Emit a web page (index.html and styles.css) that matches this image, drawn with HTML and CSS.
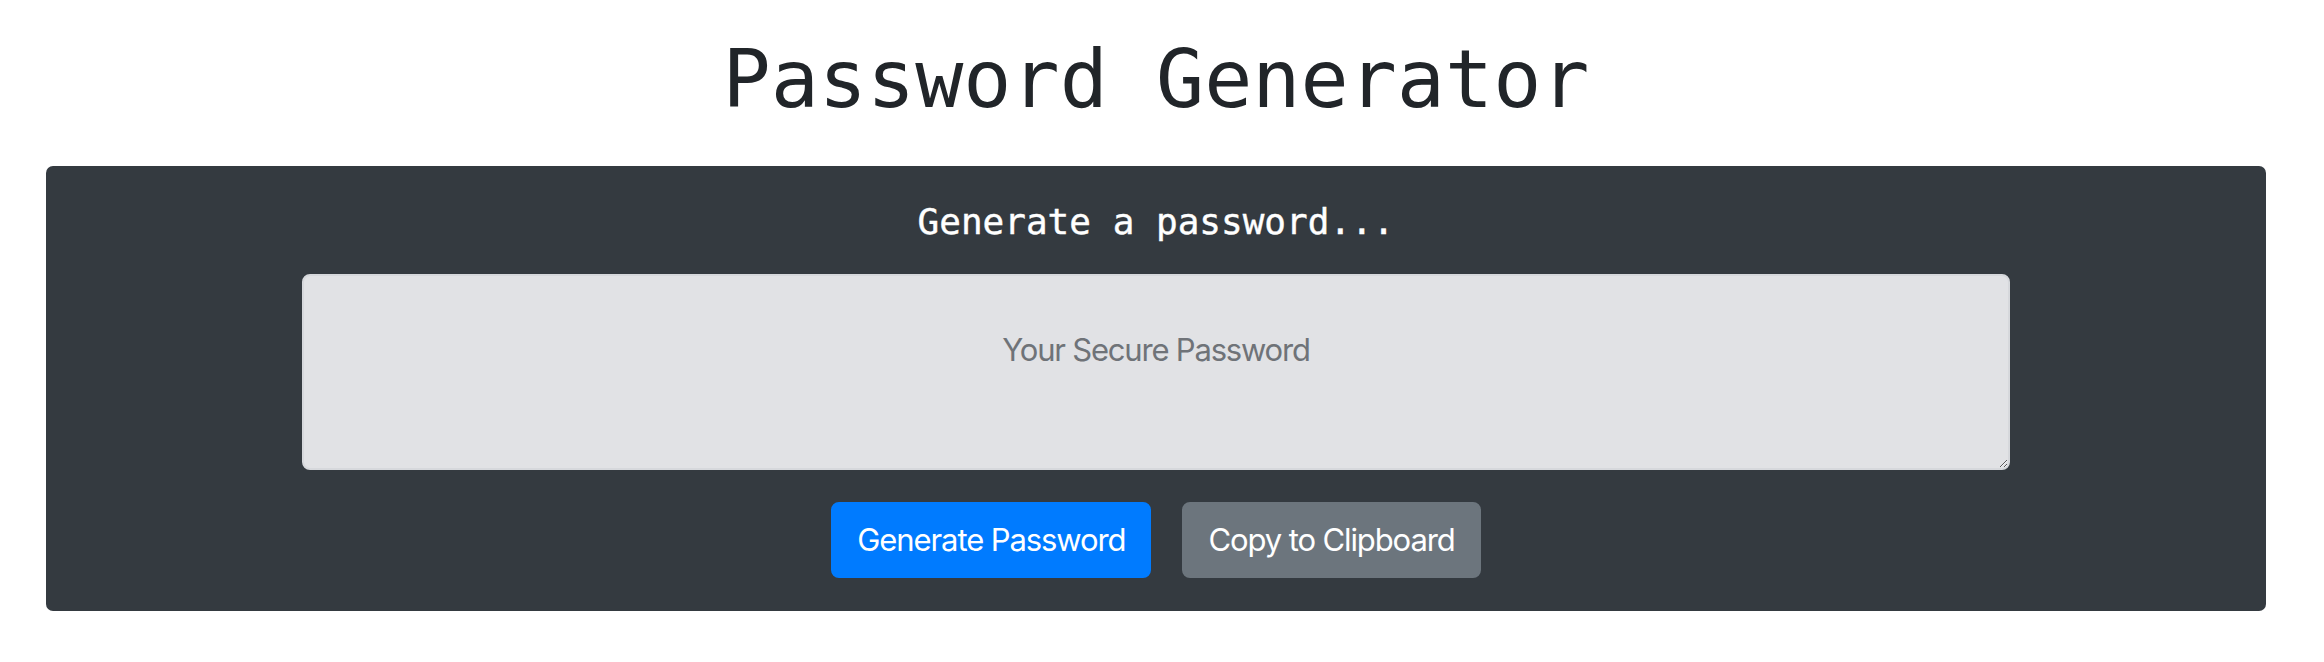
FILE: index.html
```html
<!DOCTYPE html>
<html lang="en">
<head>
<meta charset="utf-8">
<title>Password Generator</title>
<link rel="stylesheet" href="styles.css">
</head>
<body>
  <div class="container">
    <h1 class="title">Password Generator</h1>
    <div class="card">
      <h2 class="card-title">Generate a password...</h2>
      <textarea class="password" placeholder="Your Secure Password" readonly></textarea>
      <div class="actions">
        <button class="btn btn-primary" type="button">Generate Password</button>
        <button class="btn btn-secondary" type="button">Copy to Clipboard</button>
      </div>
    </div>
  </div>
</body>
</html>
```

FILE: styles.css
```css
html, body {
  margin: 0;
  padding: 0;
  background: #ffffff;
}

body {
  padding-right: 12px;
  font-family: Inter, "Noto Sans", sans-serif;
  color: #212529;
}

.container {
  max-width: 2220px;
  margin: 0 auto;
}

.title {
  margin: 32px 0 0;
  font-family: "DejaVu Sans Mono", "Liberation Mono", monospace;
  font-size: 80px;
  font-weight: 400;
  line-height: 96px;
  text-align: center;
  color: #212529;
}

.card {
  margin-top: 38px;
  background: #343a40;
  border-radius: 7px;
  padding: 34px 0 33px;
  display: flex;
  flex-direction: column;
  align-items: center;
}

.card-title {
  margin: 0;
  font-family: "DejaVu Sans Mono", "Liberation Mono", monospace;
  font-size: 36px;
  font-weight: 400;
  line-height: 43px;
  color: #ffffff;
  -webkit-text-stroke: 0.4px #ffffff;
}

.password {
  margin-top: 31px;
  width: 1708px;
  height: 196px;
  box-sizing: border-box;
  background: #e1e2e5;
  border: 2px solid #d6d8dc;
  border-radius: 8px;
  padding: 50px 24px 12px;
  font-family: Inter, "Noto Sans", sans-serif;
  font-size: 31px;
  letter-spacing: -1.2px;
  line-height: 48px;
  text-align: center;
  color: #495057;
  outline: none;
}

.password::placeholder {
  color: #6f7378;
  opacity: 1;
}

.actions {
  margin-top: 32px;
  display: flex;
  gap: 31px;
}

.btn {
  font-family: Inter, "Noto Sans", sans-serif;
  font-size: 31px;
  letter-spacing: -1.1px;
  font-weight: 400;
  line-height: 48px;
  padding: 12px 24px;
  border-radius: 8px;
  color: #ffffff;
  cursor: pointer;
}

.btn-primary {
  background: #007bff;
  border: 2px solid #007bff;
}

.btn-secondary {
  background: #6c757d;
  border: 2px solid #6c757d;
}
```
